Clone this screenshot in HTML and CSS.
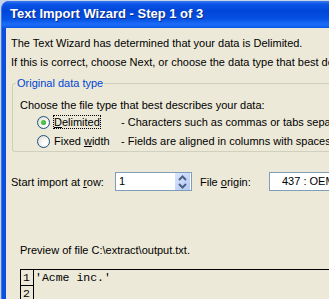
FILE: index.html
```html
<!DOCTYPE html>
<html lang="en">
<head>
  <meta charset="UTF-8" />
  <title>Text Import Wizard - Step 1 of 3</title>
  <link rel="stylesheet" href="styles.css">
</head>
<body>

<div class="window">
  <div class="titlebar">Text Import Wizard - Step 1 of 3</div>

  <div class="client">
    <p class="line first">The Text Wizard has determined that your data is Delimited.</p>
    <p class="line second">If this is correct, choose Next, or choose the data type that best describes your data.</p>

    <!-- Original data type group -->
    <fieldset class="group">
      <legend>Original data type</legend>
      <p class="line choose">Choose the file type that best describes your data:</p>

      <div class="radio-row">
        <span class="radio checked"><span class="dot"></span></span>
        <span class="radio-label"><span class="focus"><u>D</u>elimited</span></span>
        <span class="desc">- Characters such as commas or tabs separate each field.</span>
      </div>
      <div class="radio-row">
        <span class="radio"></span>
        <span class="radio-label">Fixed <u>w</u>idth</span>
        <span class="desc">- Fields are aligned in columns with spaces between each field.</span>
      </div>
    </fieldset>

    <!-- Start row and origin -->
    <div class="import-row">
      <span class="field-label">Start import at <u>r</u>ow:</span>
      <div class="spin-box">
        <span class="spin-value">1</span>
        <span class="spin-btns">
          <svg width="15" height="16" viewBox="0 0 15 16">
            <path d="M4 6 L7.5 2.5 L11 6" fill="none" stroke="#4d6185" stroke-width="2"/>
            <path d="M4 10 L7.5 13.5 L11 10" fill="none" stroke="#4d6185" stroke-width="2"/>
          </svg>
        </span>
      </div>
      <span class="field-label origin">File <u>o</u>rigin:</span>
      <div class="combo">437 : OEM United States</div>
    </div>

    <p class="preview-label">Preview of file C:\extract\output.txt.</p>

    <div class="preview">
      <div class="preview-row">
        <span class="num">1</span>
        <span class="cell">'Acme inc.'</span>
      </div>
      <div class="preview-row">
        <span class="num">2</span>
        <span class="cell"></span>
      </div>
    </div>
  </div>
</div>

</body>
</html>
```

FILE: styles.css
```css
html, body {
  margin: 0;
  padding: 0;
  height: 100%;
  overflow: hidden;
  background: #c9d3e6;
}

.window {
  margin: 1px 0 0 1px;
  height: 298px;
  border-radius: 8px 0 0 0;
  background: #0a4fe0;
  border-left: 1px solid #3a78ee;
  overflow: hidden;
  white-space: nowrap;
  font-family: "Liberation Sans", Arial, sans-serif;
  font-size: 11px;
  color: #000;
}

.titlebar {
  height: 27px;
  padding-left: 8px;
  box-sizing: border-box;
  line-height: 26px;
  font-size: 13px;
  font-weight: bold;
  color: #fff;
  text-shadow: 1px 1px 0 #0a2a8a;
  background: linear-gradient(#3a7af2 0, #0b55e6 3px, #0046d8 10px, #0551e4 18px, #1d6cf6 23px, #1060ee 26px, #0a50e0 27px);
  border-radius: 7px 0 0 0;
}

.client {
  margin-left: 4px;
  height: 271px;
  background: #ece9d8;
  padding-left: 5px;
  overflow: hidden;
}

.line {
  margin: 0;
  height: 13px;
  line-height: 13px;
}

.first {
  padding-top: 9px;
}

.second {
  margin-top: 6px;
}

.group {
  margin: 8px 0 0 1px;
  padding: 0 0 3px 7px;
  border: 1px solid #d0d0bf;
  border-radius: 3px;
  border-right: none;
}

.group legend {
  margin-left: -4px;
  padding: 0 1px;
  height: 13px;
  line-height: 13px;
  color: #0046d5;
}

.choose {
  margin-top: 9px;
}

.radio-row {
  display: flex;
  align-items: center;
  height: 13px;
  line-height: 13px;
  margin-top: 4px;
  padding-left: 17px;
}

.radio-row + .radio-row {
  margin-top: 6px;
}

.radio {
  width: 11px;
  height: 11px;
  border: 1px solid #1c5180;
  border-radius: 50%;
  background: radial-gradient(circle at 65% 65%, #fff 20%, #dcd9cd 90%);
  display: flex;
  align-items: center;
  justify-content: center;
}

.dot {
  width: 5px;
  height: 5px;
  border-radius: 50%;
  background: radial-gradient(circle at 40% 40%, #55d755, #21a121);
}

.radio-label {
  margin-left: 3px;
  width: 67px;
  padding-left: 1px;
}

.focus {
  outline: 1px dotted #000;
  outline-offset: 0;
}

.import-row {
  display: flex;
  align-items: center;
  margin-top: 20px;
  height: 19px;
}

.field-label {
  width: 104px;
}

.spin-box {
  display: flex;
  width: 75px;
  height: 17px;
  border: 1px solid #7f9db9;
  background: #fff;
  padding: 0;
}

.spin-value {
  flex: 1;
  padding-left: 3px;
  line-height: 17px;
}

.spin-btns {
  width: 15px;
  height: 16px;
  margin: 0 1px 0 0;
  padding-top: 1px;
  display: flex;
  background: linear-gradient(135deg, #dbe6fd, #b4c8f6);
}

.spin-btns svg {
  display: block;
}

.origin {
  margin-left: 8px;
  width: 69px;
}

.combo {
  flex: 1;
  height: 17px;
  line-height: 17px;
  border: 1px solid #7f9db9;
  border-right: none;
  background: #fff;
  padding-left: 12px;
  overflow: hidden;
}

.preview-label {
  margin: 53px 0 0 9px;
  height: 13px;
  line-height: 13px;
}

.preview {
  margin: 12px 0 0 9px;
  border-top: 1px solid #000;
  border-left: 1px solid #000;
  font-family: "Liberation Mono", "Courier New", monospace;
  font-size: 11.5px;
}

.preview-row {
  display: flex;
  height: 16px;
  line-height: 16px;
}

.num {
  width: 13px;
  box-sizing: border-box;
  padding-left: 2px;
  border-right: 1px solid #000;
  border-bottom: 1px solid #000;
}

.cell {
  padding-left: 1px;
}
```
